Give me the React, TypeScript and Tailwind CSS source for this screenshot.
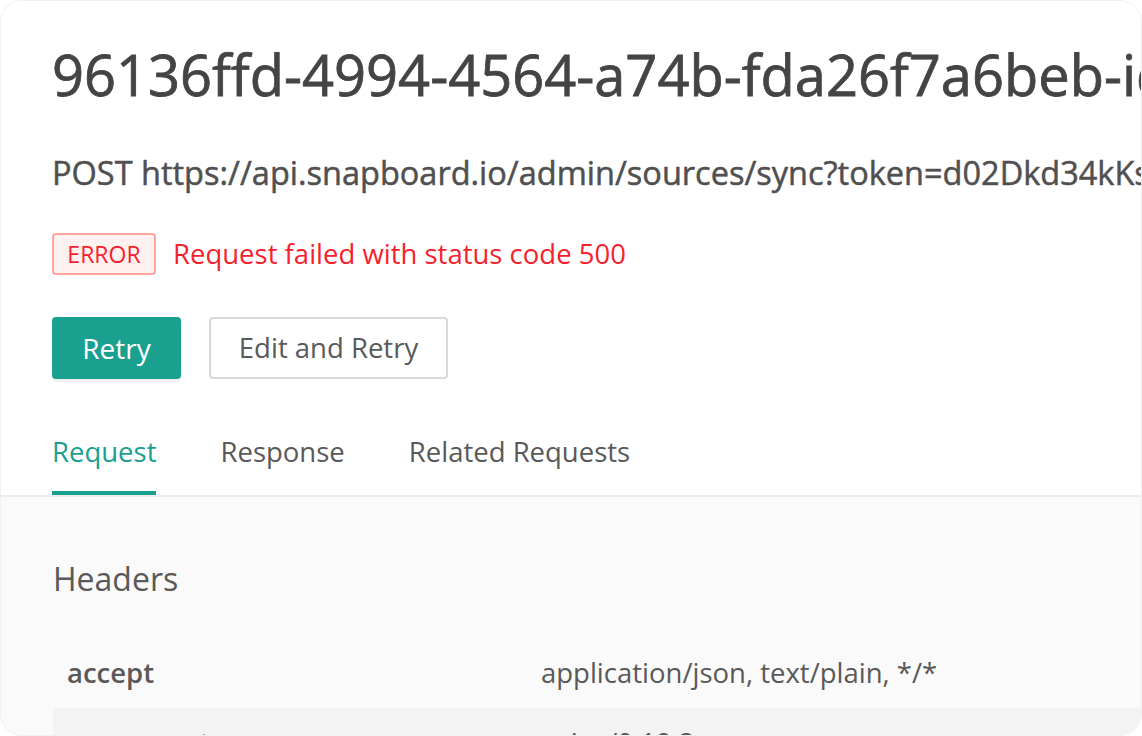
const HEADERS: { name: string; value: string }[] = [
  { name: "accept", value: "application/json, text/plain, */*" },
  { name: "user-agent", value: "axios/0.19.2" },
  { name: "content-type", value: "application/json;charset=utf-8" },
];

const TABS = ["Request", "Response", "Related Requests"];

export default function App() {
  return (
    <div
      className="h-[736px] w-[1142px] overflow-hidden bg-white"
      style={{ fontFamily: '"Open Sans", "Noto Sans", sans-serif' }}
    >
      <div className="flex h-full flex-col overflow-hidden rounded-[22px] border border-[#f0f0f0] bg-white">
        <div className="px-[51px] pt-[33px]">
          <h1 className="whitespace-nowrap text-[56px] leading-[80px] text-[#444444] [-webkit-text-stroke:0.8px_#444444]">
            96136ffd-4994-4564-a74b-fda26f7a6beb-id
          </h1>
          <p className="mt-[39px] whitespace-nowrap text-[32.5px] leading-[40px] text-[#505050] [-webkit-text-stroke:0.5px_#505050]">
            POST https://api.snapboard.io/admin/sources/sync?token=d02Dkd34kKsl20
          </p>

          <div className="mt-[40px] flex items-center gap-[17px]">
            <span className="w-[104px] rounded-[4px] border-2 border-[#ffa39e] bg-[#fff1f0] text-center text-[23px] leading-[38px] text-[#f5222d]">
              ERROR
            </span>
            <span className="text-[27.5px] leading-[40px] text-[#f5222d]">
              Request failed with status code 500
            </span>
          </div>

          <div className="mt-[42px] flex items-center gap-[28px]">
            <button
              type="button"
              className="h-[62px] w-[129px] rounded-[4px] bg-[#19a08e] text-[28px] text-white shadow-[0_3px_0_rgba(0,0,0,0.05)]"
            >
              Retry
            </button>
            <button
              type="button"
              className="h-[62px] w-[239px] rounded-[4px] border-2 border-[#d9d9d9] bg-white text-[27.5px] text-[#595959]"
            >
              Edit and Retry
            </button>
          </div>

          <div className="mt-[53px] flex gap-[64px]">
            {TABS.map((tab, i) => (
              <div
                key={tab}
                className={
                  i === 0
                    ? "border-b-4 border-[#19a08e] pb-[19px] text-[27.5px] leading-[40px] text-[#19a08e]"
                    : "pb-[23px] text-[27.5px] leading-[40px] text-[#595959]"
                }
              >
                {tab}
              </div>
            ))}
          </div>
        </div>

        <div className="flex-1 border-t-2 border-[#ececec] bg-[#fafafa] pl-[52px] pt-[60px]">
          <h2 className="text-[32px] leading-[44px] text-[#595959]">Headers</h2>
          <div className="mt-[37px]">
            {HEADERS.map((h, i) => (
              <div
                key={h.name}
                className={`flex h-[70px] items-center text-[27.5px] text-[#595959] ${
                  i % 2 === 1 ? "bg-[#f3f3f3]" : ""
                }`}
              >
                <span className="w-[488px] shrink-0 pl-[14px] font-semibold">{h.name}</span>
                <span>{h.value}</span>
              </div>
            ))}
          </div>
        </div>
      </div>
    </div>
  );
}
